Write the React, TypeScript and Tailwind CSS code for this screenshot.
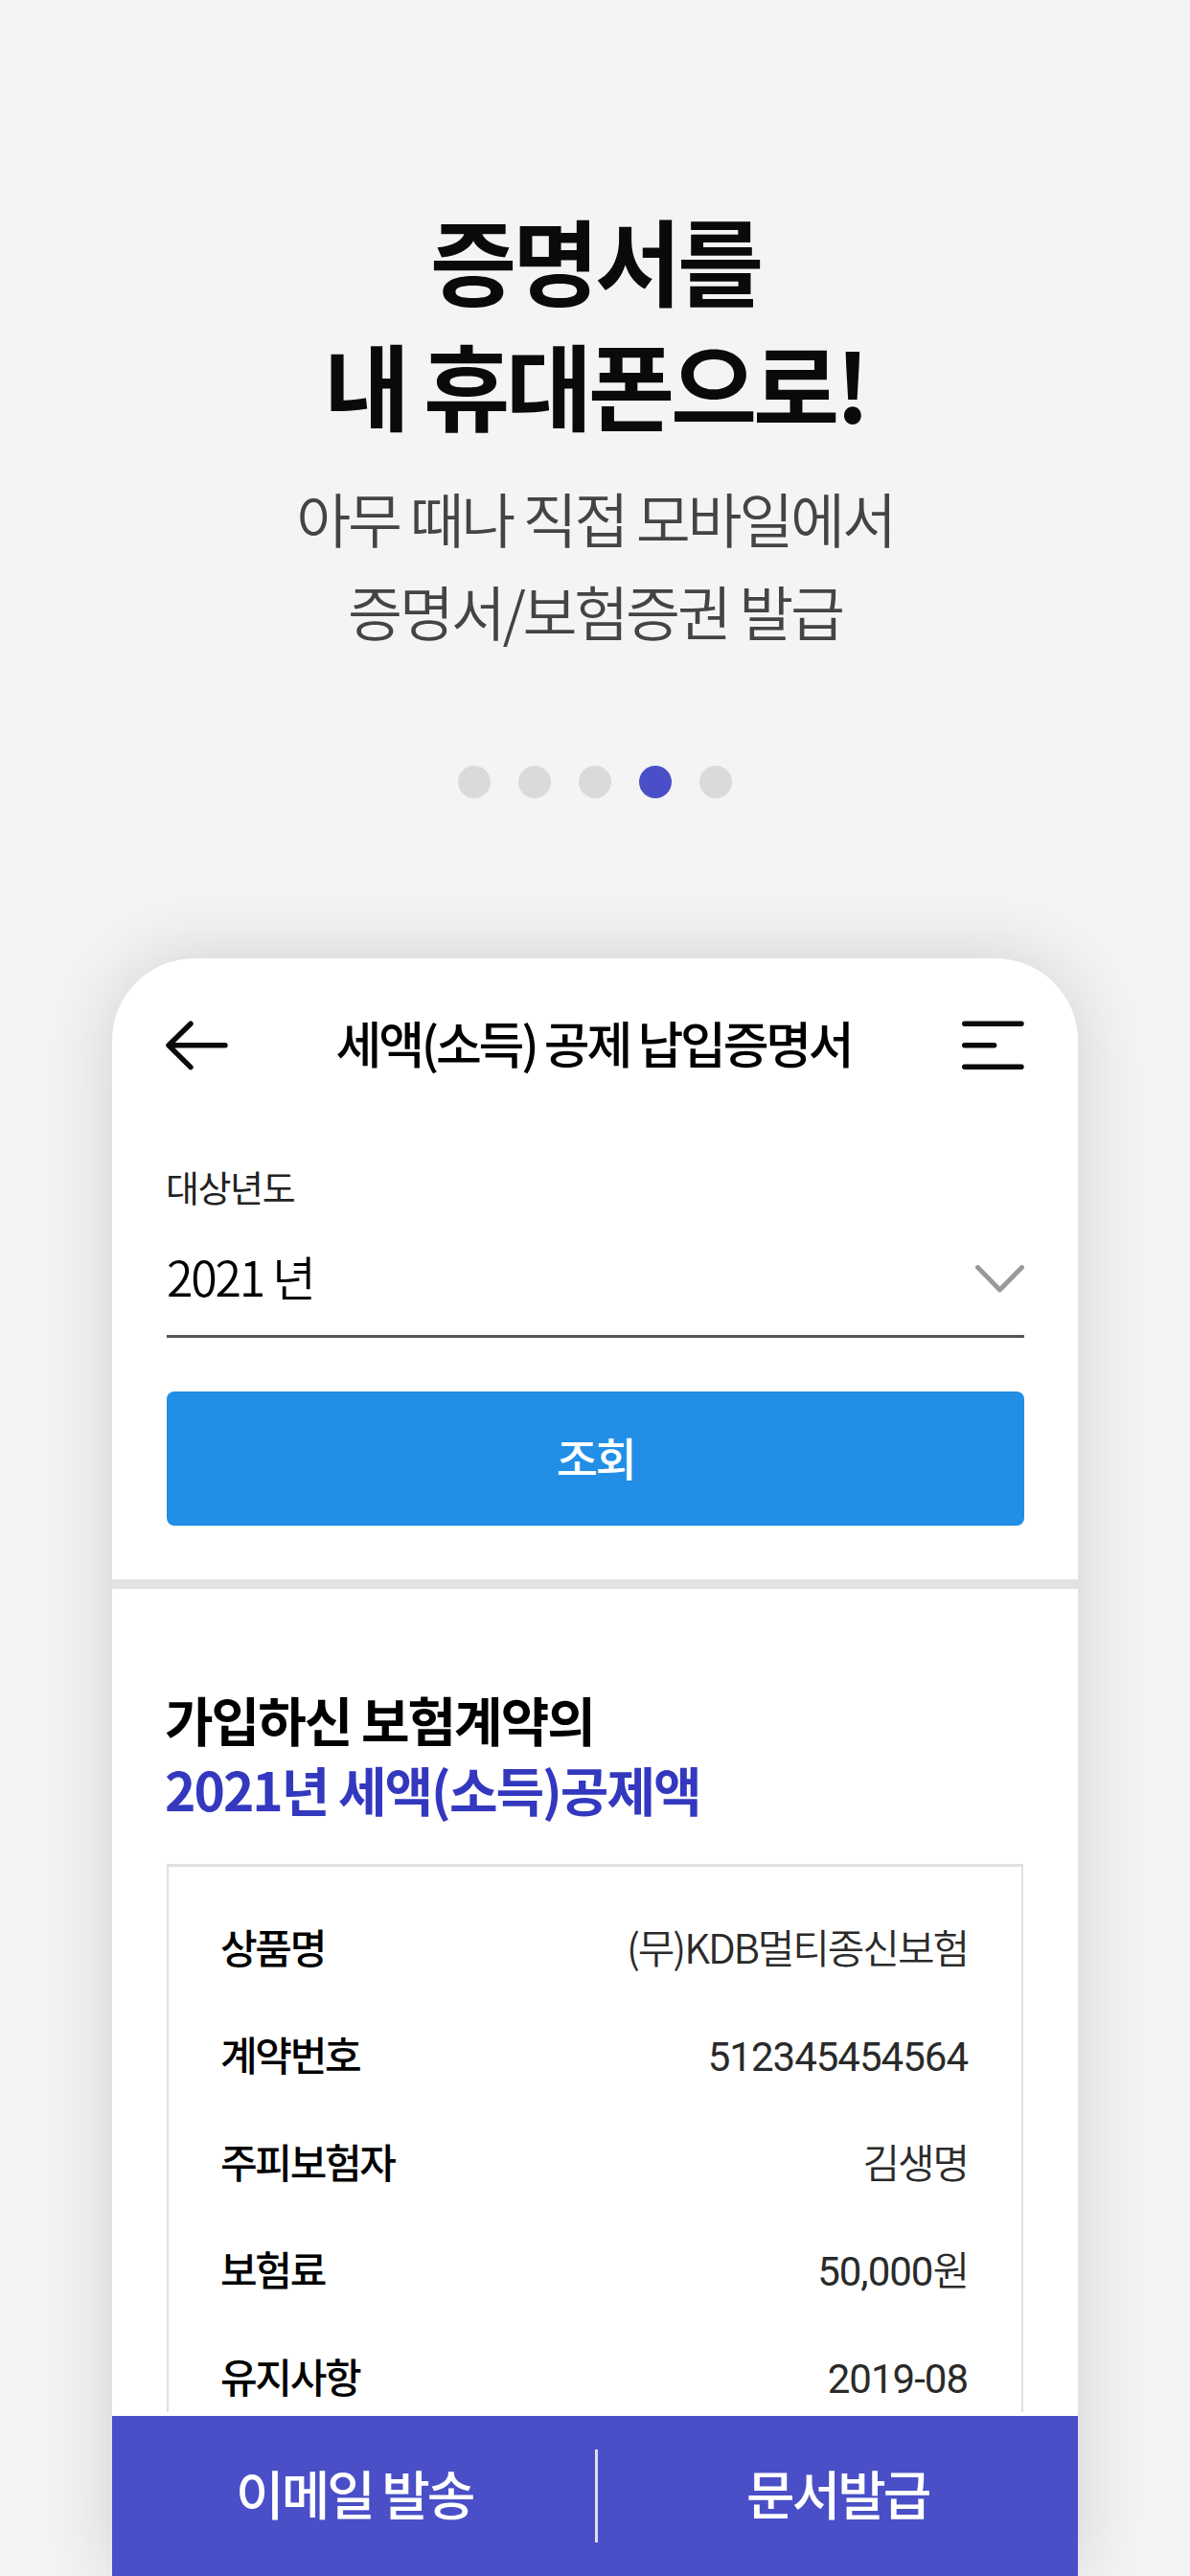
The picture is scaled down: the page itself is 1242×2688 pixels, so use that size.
import type { ReactNode } from "react";
import { clsx } from "clsx";

const SLIDE_COUNT = 5;
const ACTIVE_SLIDE = 3;

// Latin digits in the contract table use Roboto, Hangul stays on Noto.
function Num({ children }: { children: ReactNode }) {
  return <span className="font-[Roboto,sans-serif] leading-none font-normal tracking-[-1px]">{children}</span>;
}

const rows: { label: string; value: ReactNode }[] = [
  { label: "상품명", value: "(무)KDB멀티종신보험" },
  { label: "계약번호", value: <Num>512345454564</Num> },
  { label: "주피보험자", value: "김생명" },
  { label: "보험료", value: <><Num>50,000</Num>원</> },
  { label: "유지사항", value: <Num>2019-08</Num> },
];

function BackIcon() {
  return (
    <svg width="65" height="52" viewBox="0 0 65 52" fill="none" stroke="#0a0a0a" strokeWidth="5.4" strokeLinecap="round" strokeLinejoin="round">
      <path d="M62 25.8H3M26 3.2 3 25.8l23 22.8" />
    </svg>
  );
}

function MenuIcon() {
  return (
    <svg width="65" height="52" viewBox="0 0 65 52" fill="none" stroke="#0a0a0a" strokeWidth="5.4" strokeLinecap="round">
      <path d="M2.7 3.2h59.3M2.7 25.8h31M2.7 48.2h59.3" />
    </svg>
  );
}

function ChevronIcon() {
  return (
    <svg width="51" height="29" viewBox="0 0 51 29" fill="none" stroke="#999" strokeWidth="4.8" strokeLinecap="round" strokeLinejoin="round">
      <path d="M2.5 2.5 25.5 26 48.5 2.5" />
    </svg>
  );
}

function Hero() {
  return (
    <div className="flex flex-col items-center pt-[204px] text-center">
      <h1 className="text-[98px] leading-[130px] font-bold tracking-[-4.2px] text-[#0a0a0a]">
        증명서를
        <br />내 휴대폰으로!
      </h1>
      <p className="mt-[28px] text-[62px] leading-[97px] font-[350] tracking-[-3.25px] text-[#444]">
        아무 때나 직접 모바일에서
        <br />
        증명서/보험증권 발급
      </p>
      <div className="mt-[113px] flex gap-[29px]">
        {Array.from({ length: SLIDE_COUNT }, (_, i) => (
          <span
            key={i}
            className={clsx("size-[34px] rounded-full", i === ACTIVE_SLIDE ? "bg-[#4a4fc7]" : "bg-[#dadada]")}
          />
        ))}
      </div>
    </div>
  );
}

export default function App() {
  return (
    <div className="flex h-[2688px] w-[1242px] flex-col overflow-hidden bg-[#f4f4f4] font-['Noto_Sans_CJK_KR',sans-serif]">
      <Hero />

      <main className="mx-[117px] mt-[167px] flex h-[1688px] shrink-0 flex-col overflow-hidden rounded-t-[86px] bg-white shadow-[0_0_80px_rgba(0,0,0,0.15)]">
        <div className="flex h-[1517px] shrink-0 flex-col overflow-hidden">
          <header className="flex h-[182px] shrink-0 items-center justify-between px-[56px]">
            <BackIcon />
            <h2 className="pr-[3px] pb-[6px] text-[52px] leading-[52px] font-medium tracking-[-3.26px] text-black">
              세액(소득) 공제 납입증명서
            </h2>
            <MenuIcon />
          </header>

          <section className="shrink-0 pt-[28px] pr-[56px] pb-[56px] pl-[57px]">
            <p className="-ml-px text-[38px] leading-[56px] tracking-[-1.4px] text-[#222]">대상년도</p>
            <div className="flex h-[130px] items-center justify-between border-b-[3px] border-[#555] pt-[6px]">
              <span className="pb-[3px] text-[50px] leading-[78px] font-[350] tracking-[-2.2px] text-black">2021 년</span>
              <span className="mt-1">
                <ChevronIcon />
              </span>
            </div>
            <button className="mt-[56px] block h-[140px] w-full rounded-lg bg-[#228ee6] pb-[5px] text-[47px] leading-[70px] font-medium tracking-[-2.5px] text-white">
              조회
            </button>
          </section>

          <div className="h-[10px] shrink-0 bg-[#e2e2e2]" />

          <section className="flex shrink-0 flex-col px-[57px] pt-[99px]">
            <h3 className="-ml-[2px] text-[55px] leading-[73px] font-bold tracking-[-2px] text-black">
              가입하신 보험계약의
              <br />
              <span className="text-[#3338bf]">2021년 세액(소득)공제액</span>
            </h3>
            <dl className="mt-[42px] h-[700px] border-2 border-t-[3px] border-[#e0e0e0] px-[54px] pt-[27px]">
              {rows.map((row) => (
                <div key={row.label} className="flex h-[112px] justify-between text-[42px] leading-[112px]">
                  <dt className="font-medium tracking-[-2.3px] text-black">{row.label}</dt>
                  <dd className="pr-[2px] font-[350] tracking-[-2.1px] text-[#2a2a2a]">{row.value}</dd>
                </div>
              ))}
            </dl>
          </section>
        </div>

        <footer className="mt-1 flex flex-1 items-center bg-[#4a4fc7] text-[55px] font-medium tracking-[-3px] text-white">
          <button className="flex-1 pb-[8px] pl-[2px]">이메일 발송</button>
          <span className="h-[97px] w-[3px] bg-[#dddef5]" />
          <button className="flex-1 pb-[8px]">문서발급</button>
        </footer>
      </main>
    </div>
  );
}
